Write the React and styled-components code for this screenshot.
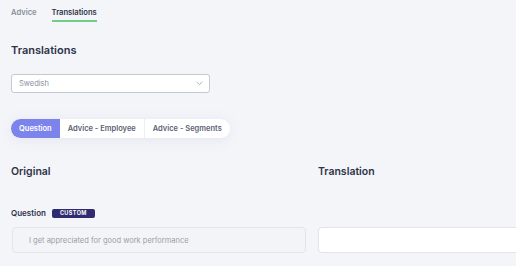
import { createGlobalStyle, styled } from "styled-components";

const GlobalStyle = createGlobalStyle`
	html, body {
		margin: 0;
		padding: 0;
		background: #f4f5f9;
		overflow: hidden;
	}
	body {
		font-family: "Inter", "Open Sans", sans-serif;
		color: #2d3348;
	}
`;

const Page = styled.div`
	width: 614px;
	padding: 0 11px;
	box-sizing: border-box;
`;

const TabBar = styled.nav`
	display: flex;
	gap: 15px;
	height: 23px;
	padding-top: 7px;
	box-sizing: border-box;
`;

const Tab = styled.div`
	font-size: 7.6px;
	font-weight: 600;
	color: ${(p) => (p.$active ? "#2d3348" : "#8a8f9c")};
	height: 12px;
	padding-top: 1px;
	border-bottom: 2px solid ${(p) => (p.$active ? "#6fcf86" : "transparent")};
	line-height: 10px;
`;

const Heading = styled.h1`
	margin: 20px 0 0;
	font-size: 11px;
	font-weight: 600;
	line-height: 14px;
	color: #2d3348;
`;

const Select = styled.div`
	margin-top: 17px;
	width: 199px;
	height: 19px;
	box-sizing: border-box;
	display: flex;
	align-items: center;
	justify-content: space-between;
	padding: 0 6px 0 7px;
	background: #fff;
	border: 1px solid #c4c9d2;
	border-radius: 3px;
	font-size: 7.5px;
	color: #8a8f9b;
`;

const Segments = styled.div`
	margin-top: 26px;
	display: inline-flex;
	height: 19px;
	border-radius: 10px;
	background: #fff;
	box-shadow: 0 2px 14px rgba(120, 130, 170, 0.12);
`;

const Segment = styled.div`
	display: flex;
	align-items: center;
	padding: 0 8px;
	font-size: 7.5px;
	font-weight: 600;
	color: ${(p) => (p.$active ? "#fff" : "#5c6273")};
	background: ${(p) => (p.$active ? "#7c84ec" : "transparent")};
	border-left: ${(p) => (p.$divider ? "1px solid #eceef3" : "none")};
	&:first-child {
		border-radius: 10px 0 0 10px;
	}
	&:last-child {
		border-radius: 0 10px 10px 0;
	}
`;

const Columns = styled.div`
	margin-top: 28px;
	display: grid;
	grid-template-columns: 295px 295px;
	column-gap: 12px;
`;

const Column = styled.div`
	display: flex;
	flex-direction: column;
`;

const ColTitle = styled.h2`
	margin: 0;
	font-size: 10.5px;
	font-weight: 600;
	line-height: 12px;
	color: #2d3348;
`;

const LabelRow = styled.div`
	margin-top: 29px;
	height: 12px;
	display: flex;
	align-items: center;
	gap: 6px;
`;

const Label = styled.span`
	font-size: 8px;
	font-weight: 600;
	color: #2d3348;
`;

const Badge = styled.span`
	background: #2f2b70;
	color: #fff;
	font-size: 5.5px;
	font-weight: 700;
	letter-spacing: 0.4px;
	padding: 1px 8px;
	border-radius: 2px;
	line-height: 7px;
`;

const TextBox = styled.div`
	margin-top: 8px;
	height: 26px;
	box-sizing: border-box;
	margin-left: ${(p) => (p.$inset ? 1 : 0)}px;
	display: flex;
	align-items: center;
	padding: 0 16px;
	background: ${(p) => (p.$readonly ? "#f3f4f8" : "#fff")};
	border: 1px solid #e2e4ea;
	border-radius: 4px;
	font-size: 7.5px;
	color: #9a9ea9;
`;

function Chevron() {
	return (
		<svg width="7" height="5" viewBox="0 0 7 5" fill="none">
			<path d="M1 1.2 L3.5 3.6 L6 1.2" stroke="#a6abb6" strokeWidth="0.9" strokeLinecap="round" strokeLinejoin="round" />
		</svg>
	);
}

export default function App() {
	return (
		<Page>
			<GlobalStyle />
			<TabBar>
				<Tab>Advice</Tab>
				<Tab $active>Translations</Tab>
			</TabBar>
			<Heading>Translations</Heading>
			<Select>
				<span>Swedish</span>
				<Chevron />
			</Select>
			<Segments>
				<Segment $active>Question</Segment>
				<Segment>Advice - Employee</Segment>
				<Segment $divider>Advice - Segments</Segment>
			</Segments>
			<Columns>
				<Column>
					<ColTitle>Original</ColTitle>
					<LabelRow>
						<Label>Question</Label>
						<Badge>CUSTOM</Badge>
					</LabelRow>
					<TextBox $readonly $inset>I get appreciated for good work performance</TextBox>
				</Column>
				<Column>
					<ColTitle>Translation</ColTitle>
					<LabelRow />
					<TextBox />
				</Column>
			</Columns>
		</Page>
	);
}
